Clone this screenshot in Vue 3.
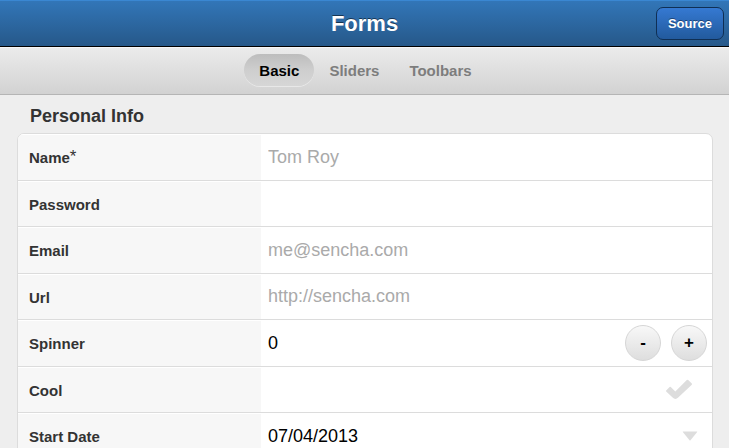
<script setup>
import { ref } from 'vue'

const tabs = ['Basic', 'Sliders', 'Toolbars']
const active = ref('Basic')
const name = ref('')
const password = ref('')
const email = ref('')
const url = ref('')
const count = ref(0)
const cool = ref(false)
const startDate = ref('07/04/2013')
</script>

<template>
  <div class="page">
    <header class="titlebar">
      <h1 class="title">Forms</h1>
      <button type="button" class="source">Source</button>
    </header>

    <nav class="tabbar">
      <button
        v-for="tab in tabs"
        :key="tab"
        type="button"
        class="tab"
        :class="{ active: tab === active }"
        @click="active = tab"
      >{{ tab }}</button>
    </nav>

    <main class="content">
      <h2 class="legend">Personal Info</h2>
      <form class="fieldset" @submit.prevent>
        <div class="row">
          <label class="label" for="name">Name<span class="required">*</span></label>
          <div class="field"><input id="name" v-model="name" class="input" type="text" placeholder="Tom Roy" required></div>
        </div>
        <div class="row">
          <label class="label" for="password">Password</label>
          <div class="field"><input id="password" v-model="password" class="input" type="password"></div>
        </div>
        <div class="row">
          <label class="label" for="email">Email</label>
          <div class="field"><input id="email" v-model="email" class="input" type="email" placeholder="me@sencha.com"></div>
        </div>
        <div class="row">
          <label class="label" for="url">Url</label>
          <div class="field"><input id="url" v-model="url" class="input" type="url" placeholder="http://sencha.com"></div>
        </div>
        <div class="row">
          <label class="label" for="spinner">Spinner</label>
          <div class="field spinner">
            <input id="spinner" v-model.number="count" class="input" type="text" inputmode="numeric">
            <button type="button" class="step" @click="count--">-</button>
            <button type="button" class="step" @click="count++">+</button>
          </div>
        </div>
        <div class="row">
          <label class="label" for="cool">Cool</label>
          <div class="field check">
            <input id="cool" v-model="cool" class="checkbox" type="checkbox">
            <svg class="tick" viewBox="0 0 28 22" width="28" height="22" aria-hidden="true">
              <path d="M1.2 11.4 4.6 8Q5.2 7.5 5.8 8L10.3 12.4 21.8 1Q22.5.4 23.2 1L26.8 4.6Q27.3 5.2 26.8 5.8L13.2 18.6Q10.4 21.2 7.6 18.6L1.2 12.5Q.7 12 1.2 11.4Z" />
            </svg>
          </div>
        </div>
        <div class="row">
          <label class="label" for="start">Start Date</label>
          <div class="field date">
            <input id="start" v-model="startDate" class="input" type="text">
            <svg class="arrow" viewBox="0 0 16 10" width="16" height="10" aria-hidden="true">
              <path d="M1 .5H15Q15.5.5 15.2 1L8.5 9.2Q8 9.7 7.5 9.2L.8 1Q.5.5 1 .5Z" />
            </svg>
          </div>
        </div>
      </form>
    </main>
  </div>
</template>

<style>
body {
  background: #eee;
}
</style>

<style scoped>
.page {
  height: 100vh;
  overflow: hidden;
  background: #eee;
  color: #333;
  font-family: "Liberation Sans", Helvetica, Arial, sans-serif;
}

.page *,
.page {
  box-sizing: border-box;
}

button,
input {
  margin: 0;
  font-family: inherit;
}

.titlebar {
  display: grid;
  grid-template-columns: 1fr auto 1fr;
  align-items: center;
  height: 47px;
  padding: 0 5px;
  border-top: 1px solid #3a87d2;
  border-bottom: 1px solid #000;
  background: linear-gradient(#3276b8, #265889);
}

.title {
  grid-column: 2;
  margin: 0;
  color: #fff;
  font-size: 22px;
  line-height: 26px;
  text-shadow: 0 -1px 0 rgba(0, 0, 0, 0.5);
}

.source {
  justify-self: end;
  height: 33px;
  padding: 0 11px;
  border: 1px solid #0f2f55;
  border-radius: 7px;
  background: linear-gradient(#3579d2, #225a9d);
  color: #fff;
  font-size: 13px;
  font-weight: bold;
  text-shadow: 0 -1px 0 rgba(0, 0, 0, 0.4);
}

.tabbar {
  display: flex;
  justify-content: center;
  align-items: center;
  height: 48px;
  padding: 0 0 2px 2px;
  border-top: 1px solid #f6f6f6;
  border-bottom: 1px solid #b5b5b5;
  background: linear-gradient(#ebebeb, #d2d2d2);
}

.tab {
  height: 32px;
  padding: 0 15px;
  border: 0;
  border-radius: 16px;
  background: none;
  color: #7d7d7d;
  font-size: 15px;
  font-weight: bold;
}

.tab.active {
  background: linear-gradient(#bdbdbd, #cecece 50%, #d6d6d6);
  box-shadow: 0 1px 0 #e8e8e8;
  color: #000;
}

.content {
  padding: 9px 16px 16px 17px;
}

.legend {
  margin: 0;
  padding: 0 13px 5px;
  font-size: 18px;
  line-height: 24px;
}

.fieldset {
  overflow: hidden;
  border: 1px solid #dcdcdc;
  border-radius: 7px;
  background: #fff;
}

.row {
  display: grid;
  grid-template-columns: 35% 1fr;
  height: 47px;
  border-bottom: 1px solid #dcdcdc;
}

.row:nth-child(even) {
  height: 46px;
}

.label {
  display: flex;
  align-items: center;
  padding: 0 11px;
  border-top: 1px solid #fff;
  background: #f7f7f7;
  font-size: 15px;
  font-weight: bold;
}

.required {
  align-self: flex-start;
  padding-top: 12px;
  font-size: 17px;
  font-weight: normal;
}

.field {
  display: flex;
  align-items: center;
  min-width: 0;
}

.input {
  flex: 1;
  min-width: 0;
  height: 100%;
  padding: 0 7px;
  border: 0;
  outline: 0;
  background: transparent;
  color: #000;
  font-size: 18px;
}

.input::placeholder {
  color: #aaa;
  opacity: 1;
}

.spinner {
  gap: 10px;
  padding-right: 5px;
}

.step {
  width: 36px;
  height: 36px;
  padding: 0;
  border: 1px solid #d6d6d6;
  border-radius: 50%;
  background: linear-gradient(#f8f8f8, #dedede);
  color: #000;
  font-size: 17px;
  font-weight: bold;
}

.check {
  position: relative;
  justify-content: flex-end;
  padding-right: 19px;
}

.checkbox {
  position: absolute;
  inset: 0;
  width: 100%;
  height: 100%;
  appearance: none;
}

.tick,
.arrow {
  fill: #ddd;
  pointer-events: none;
}

.checkbox:checked + .tick {
  fill: #2a6fbb;
}

.date {
  padding-right: 14px;
}
</style>
